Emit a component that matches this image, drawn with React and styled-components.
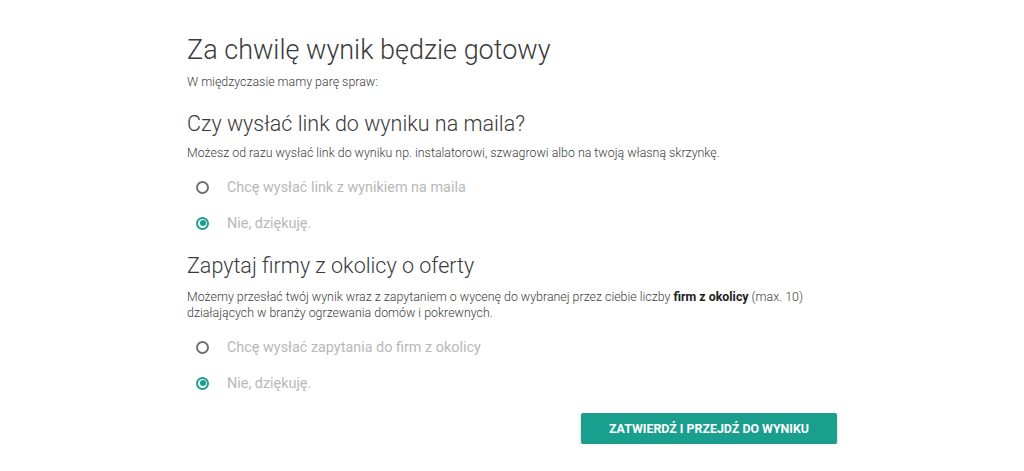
import React, { useState } from 'react'
import styled, { createGlobalStyle } from 'styled-components';

const GlobalStyle = createGlobalStyle`
    html, body {
        margin: 0;
        padding: 0;
        background: #ffffff;
        font-family: Roboto, "Noto Sans", Arial, sans-serif;
    }
`;

const Wrapper = styled('div')`
    width: 650px;
    margin: 0 auto;
    padding-top: 33px;
    display: flex;
    flex-direction: column;
`;

const Title = styled('h1')`
    margin: 0;
    font-size: 27px;
    line-height: 34px;
    font-weight: 300;
    color: #3a3a3a;
`;

const Lead = styled('p')`
    margin: 6px 0 0;
    font-size: 12.4px;
    line-height: 18px;
    font-weight: 300;
    color: #3c3c3c;
`;

const Heading = styled('h2')`
    margin: ${({ first }) => (first ? '19px' : '17px')} 0 0;
    font-size: 21.5px;
    line-height: 28px;
    font-weight: 300;
    color: #3a3a3a;
`;

const Text = styled('p')`
    margin: ${({ tight }) => (tight ? '7px' : '9px')} 0 0;
    font-size: 12.4px;
    line-height: 16px;
    font-weight: 300;
    color: #3c3c3c;
    b {
        font-weight: 700;
        color: #222222;
    }
`;

const Options = styled('div')`
    margin-top: ${({ gap }) => gap}px;
    display: flex;
    flex-direction: column;
    gap: 12px;
`;

const Option = styled('label')`
    display: flex;
    align-items: center;
    height: 24px;
    padding-left: 9px;
    cursor: pointer;
`;

const Dot = styled('span')`
    position: relative;
    box-sizing: border-box;
    width: 13px;
    height: 13px;
    border-radius: 50%;
    border: 2px solid ${({ checked }) => (checked ? '#1a9e8d' : '#6f6f6f')};
    flex-shrink: 0;
    &::after {
        content: '';
        position: absolute;
        left: 1.5px;
        top: 1.5px;
        width: 6px;
        height: 6px;
        border-radius: 50%;
        background: #1a9e8d;
        display: ${({ checked }) => (checked ? 'block' : 'none')};
    }
`;

const OptionText = styled('span')`
    margin-left: 18px;
    font-size: 14.4px;
    color: #b8b8b8;
`;

const Footer = styled('div')`
    margin-top: 18px;
    display: flex;
    justify-content: flex-end;
`;

const Button = styled('button')`
    height: 31px;
    width: 256px;
    border: none;
    border-radius: 2px;
    background: #1a9e8d;
    color: #ffffff;
    font-family: Roboto, Arial, sans-serif;
    font-size: 12.4px;
    font-weight: 700;
    text-transform: uppercase;
    box-shadow: 0 2px 4px rgba(0, 0, 0, 0.2);
    cursor: pointer;
`;

function RadioGroup({ options, value, onChange, gap }) {
    return (
        <Options gap={gap}>
            {options.map((opt, i) => (
                <Option key={opt} onClick={() => onChange(i)}>
                    <Dot checked={value === i} />
                    <OptionText>{opt}</OptionText>
                </Option>
            ))}
        </Options>
    )
}

function App() {
    const [mail, setMail] = useState(1);
    const [firms, setFirms] = useState(1);

    return (
        <Wrapper>
            <GlobalStyle />
            <Title>Za chwilę wynik będzie gotowy</Title>
            <Lead>W międzyczasie mamy parę spraw:</Lead>

            <Heading first>Czy wysłać link do wyniku na maila?</Heading>
            <Text tight>Możesz od razu wysłać link do wyniku np. instalatorowi, szwagrowi albo na twoją własną skrzynkę.</Text>
            <RadioGroup
                gap={14}
                options={['Chcę wysłać link z wynikiem na maila', 'Nie, dziękuję.']}
                value={mail}
                onChange={setMail}
            />

            <Heading>Zapytaj firmy z okolicy o oferty</Heading>
            <Text>
                Możemy przesłać twój wynik wraz z zapytaniem o wycenę do wybranej przez ciebie liczby <b>firm z okolicy</b> (max. 10) działających w branży ogrzewania domów i pokrewnych.
            </Text>
            <RadioGroup
                gap={14}
                options={['Chcę wysłać zapytania do firm z okolicy', 'Nie, dziękuję.']}
                value={firms}
                onChange={setFirms}
            />

            <Footer>
                <Button>Zatwierdź i przejdź do wyniku</Button>
            </Footer>
        </Wrapper>
    )
}

export default App
